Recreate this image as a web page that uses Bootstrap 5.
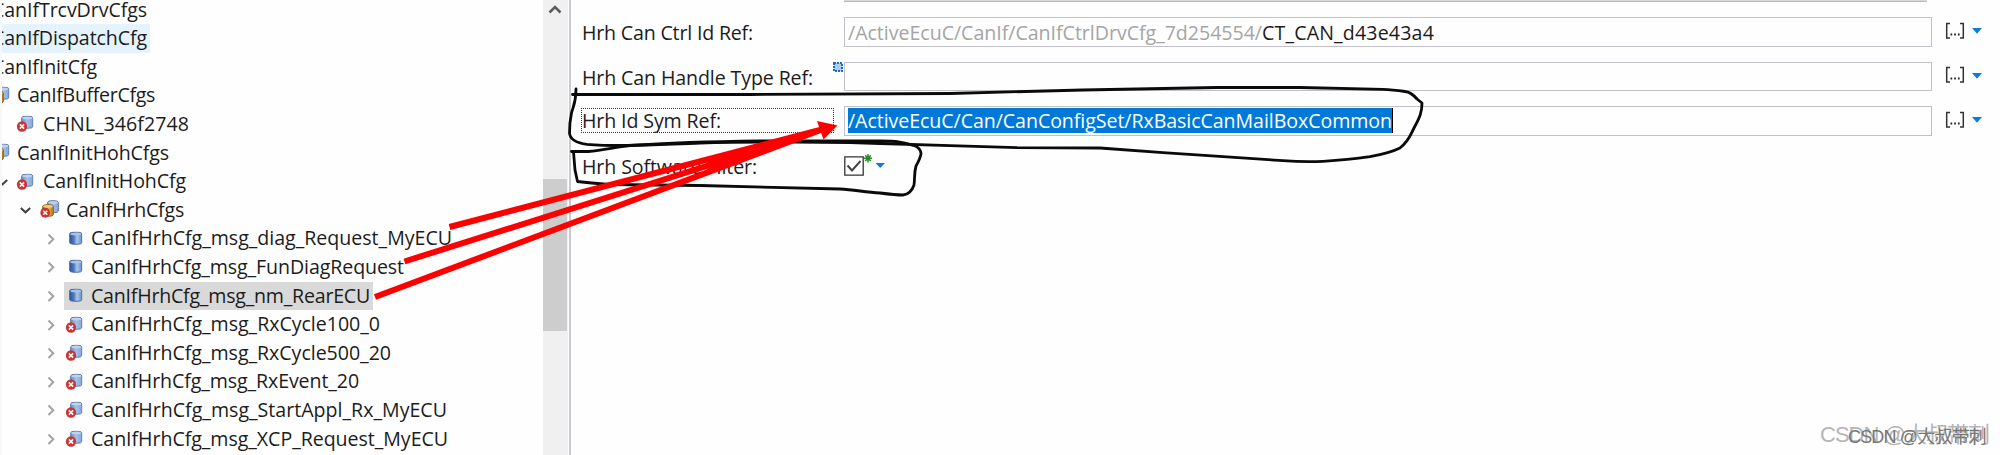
<!DOCTYPE html>
<html lang="en">
<head>
<meta charset="utf-8">
<title>CanIf configuration</title>
<link href="https://cdn.jsdelivr.net/npm/bootstrap@5.3.0/dist/css/bootstrap.min.css" rel="stylesheet">
<script src="https://cdn.jsdelivr.net/npm/bootstrap@5.3.0/dist/js/bootstrap.bundle.min.js"></script>
<style>
  body { width: 2000px; height: 455px; font: 19.6px/28px "Open Sans", "Noto Sans", sans-serif; color: #1c1c1c; background: #fefefe; }
  .tree { width: 543px; border-left: 2px solid #f8f8f8; }
  .tree-rows { margin-top: -4.3px; }
  .tree-item { height: 28.6px; }
  .tree-item svg { flex: none; }
  .lv-cut { margin-left: -10px; }
  .lv-0 { margin-left: -9px; }
  .lv-1 { margin-left: -6px; }
  .lv-2 { margin-left: 17px; }
  .lv-3 { margin-left: 42px; }
  .twist { width: 13px; margin-right: 7px; }
  .lv-1 .twist, .lv-2 .twist { margin-right: 6px; }
  .glyph { width: 24px; margin-right: 3px; }
  .lv-0 .glyph { margin-right: 0; }
  .lv-1 .glyph, .lv-2 .glyph { margin-right: 4px; }
  .hot { background: #e5f3ff; }
  .picked { background: #d9d9d9; }
  .node { height: 28.6px; line-height: 28.6px; padding-right: 3px; }
  .fit { white-space: pre; display: inline-block; }
  .scroller { width: 25px; background: #f0f0f0; }
  .scroller svg { margin: 4px 0 0 5px; }
  .thumb { margin-top: 163px; height: 152px; width: 24px; background: #cdcdcd; }
  .splitter { width: 2px; margin-left: 1px; background: #c9c9d0; }
  .form-pane { padding-left: 11px; }
  .stub { height: 2px; margin-left: 262px; width: 1083px; background: #d9d9dd; border-bottom: 1px solid #b9b9c0; }
  .top-gap { height: 15px; }
  .form-line { height: 29.6px; margin-bottom: 15px; }
  .name-cell { width: 262px; height: 29.6px; line-height: 31px; }
  .name-cell.focused { width: 253px; height: 25px; line-height: 24px; border: 1px dotted #333; margin: 0 10px 0 -1px; }
  .field { width: 1088px; height: 29.6px; border: 1.5px solid #c0c0c6; padding-left: 3px; line-height: 29px; }
  .dim { color: #a5a5a5; }
  .chosen { background: #0078d7; color: #fff; height: 25px; line-height: 26px; border-right: 1px solid #000; }
  .browse { width: 20px; height: 18px; margin-left: 13px; margin-top: -2px; }
  .drop { margin-left: 7px; margin-top: -1px; }
  .tag-new { left: -12px; top: -1px; }
  .ink { left: 0; top: 0; pointer-events: none; }
  .mark-a, .mark-b { white-space: pre; font-family: "Liberation Sans", "Noto Sans CJK SC", sans-serif; line-height: 26px; }
  .mark-a { left: 1820px; top: 422px; font-size: 22px; color: #b5b5b5; }
  .mark-b { left: 1848px; top: 424px; font-size: 18px; color: #777; }
</style>
</head>
<body class="position-relative overflow-hidden">
<svg width="0" height="0" class="position-absolute">
  <defs>
    <linearGradient id="blue"><stop offset="0" stop-color="#2c5499"/><stop offset=".35" stop-color="#4f7bc2"/><stop offset=".6" stop-color="#a9c6ec"/><stop offset="1" stop-color="#6b90c8"/></linearGradient>
    <linearGradient id="pale"><stop offset="0" stop-color="#6d8fc4"/><stop offset=".5" stop-color="#a3c0e8"/><stop offset="1" stop-color="#86a6d6"/></linearGradient>
    <linearGradient id="gold"><stop offset="0" stop-color="#9b6a10"/><stop offset=".6" stop-color="#e8b540"/><stop offset="1" stop-color="#a87415"/></linearGradient>
    <symbol id="cyl" viewBox="0 0 14 14" preserveAspectRatio="none"><path d="M.7 2.400Q.7.6 7 .6t6.300 1.800v9.100Q13.300 13.300 7 13.300T.7 11.500z" fill="url(#blue)" stroke="#3f5f95" stroke-width=".9"/><ellipse cx="7" cy="2.700" rx="5.700" ry="1.500" fill="#a9c3e6"/></symbol>
    <symbol id="cylp" viewBox="0 0 14 14" preserveAspectRatio="none"><path d="M.7 2.400Q.7.6 7 .6t6.300 1.800v9.100Q13.300 13.300 7 13.300T.7 11.500z" fill="url(#pale)" stroke="#4d6c9f" stroke-width=".9"/><ellipse cx="7" cy="2.700" rx="5.700" ry="1.500" fill="#bcd2ef"/></symbol>
    <symbol id="cylg" viewBox="0 0 14 14" preserveAspectRatio="none"><path d="M.7 2.400Q.7.6 7 .6t6.300 1.800v9.100Q13.300 13.300 7 13.300T.7 11.500z" fill="url(#gold)" stroke="#875b10" stroke-width=".9"/><ellipse cx="7" cy="2.700" rx="5.700" ry="1.500" fill="#eccb7c"/></symbol>
    <symbol id="err" viewBox="0 0 12 12"><circle cx="6" cy="6" r="5.600" fill="#cb3434"/><path d="M3.700 3.700l4.600 4.600M8.300 3.700L3.700 8.300" stroke="#fff" stroke-width="1.700"/></symbol>
    <symbol id="ok-node" viewBox="0 0 24 24"><use href="#cyl" x="5" y="4.500" width="13.500" height="13.500"/></symbol>
    <symbol id="bad-node" viewBox="0 0 24 24"><use href="#cylp" x="6" y="3.500" width="12.500" height="13.500"/><use href="#err" x="1.500" y="9" width="11" height="11"/></symbol>
    <symbol id="bad-group" viewBox="0 0 24 24"><use href="#cylp" x="9" y="2" width="12" height="13.500"/><use href="#cylg" x="4" y="6" width="12" height="13"/><use href="#err" x="2" y="9.500" width="10.500" height="10.500"/></symbol>
    <symbol id="group" viewBox="0 0 24 24"><use href="#cylp" x="4.500" y="2.500" width="12" height="13.500"/><use href="#cylg" x="-1" y="6.500" width="12" height="13.500"/></symbol>
    <symbol id="shut" viewBox="0 0 13 20"><path d="M4.500 5.500L9.300 10.200L4.500 15" fill="none" stroke="#a3a3a3" stroke-width="2"/></symbol>
    <symbol id="open" viewBox="0 0 13 20"><path d="M1.800 8L6.500 12.300L11.200 8" fill="none" stroke="#404040" stroke-width="2"/></symbol>
    <symbol id="dots" viewBox="0 0 20 18"><path d="M5 1.500H1.700v14.500H5M15 1.500h3.300v14.500H15" fill="none" stroke="#333" stroke-width="1.500"/><path d="M5.500 11.500h1.700v2H5.500zM9.200 11.500h1.700v2H9.200zM12.900 11.500h1.700v2h-1.700z" fill="#222"/></symbol>
    <symbol id="tri" viewBox="0 0 10 6"><path d="M0 0h10L5 5.800z" fill="#0b7bdc"/></symbol>
  </defs>
</svg>
<main class="d-flex h-100">
  <section class="tree overflow-hidden flex-shrink-0"><div class="tree-rows" id="rows"></div></section>
  <div class="scroller flex-shrink-0">
    <svg class="d-block" width="14" height="12" viewBox="0 0 14 12"><path d="M1.500 8.500L7 3L12.500 8.500" fill="none" stroke="#5c5c5c" stroke-width="2.600"/></svg>
    <div class="thumb"></div>
  </div>
  <div class="splitter flex-shrink-0"></div>
  <section class="form-pane flex-grow-1">
    <div class="stub"></div>
    <div class="top-gap"></div>
    <div class="form-line d-flex align-items-center">
      <div class="name-cell"><span class="fit" data-w="171">Hrh Can Ctrl Id Ref:</span></div>
      <div class="field d-flex"><span class="fit dim" data-w="414">/ActiveEcuC/CanIf/CanIfCtrlDrvCfg_7d254554/</span><span class="fit" data-w="172">CT_CAN_d43e43a4</span></div>
      <svg class="browse"><use href="#dots"/></svg><svg class="drop" width="10" height="6"><use href="#tri"/></svg>
    </div>
    <div class="form-line d-flex align-items-center">
      <div class="name-cell"><span class="fit" data-w="231">Hrh Can Handle Type Ref:</span></div>
      <div class="field position-relative">
        <svg class="tag-new position-absolute" width="10" height="10"><path d="M1 1h8v8H1z" fill="#a9cdf0" stroke="#2369b5" stroke-width="2" stroke-dasharray="2 1"/></svg>
      </div>
      <svg class="browse"><use href="#dots"/></svg><svg class="drop" width="10" height="6"><use href="#tri"/></svg>
    </div>
    <div class="form-line d-flex align-items-center">
      <div class="name-cell focused"><span class="fit" data-w="139">Hrh Id Sym Ref:</span></div>
      <div class="field d-flex align-items-center"><span class="fit chosen" data-w="545">/ActiveEcuC/Can/CanConfigSet/RxBasicCanMailBoxCommon</span></div>
      <svg class="browse"><use href="#dots"/></svg><svg class="drop" width="10" height="6"><use href="#tri"/></svg>
    </div>
    <div class="form-line d-flex align-items-center">
      <div class="name-cell"><span class="fit" data-w="175">Hrh Software Filter:</span></div>
      <svg width="44" height="30" viewBox="0 0 44 30">
        <path d="M.8 5.800h18.400v18.400H.8z" fill="#fff" stroke="#333" stroke-width="1.300"/>
        <path d="M3.500 14.500L8 19.500L16.500 10" fill="none" stroke="#444" stroke-width="2"/>
        <path d="M24 3v8.500M20 7.200h8M21.200 4.400l5.600 5.600M26.800 4.400l-5.600 5.600" stroke="#2a8a2a" stroke-width="1.500"/>
        <path d="M31.500 12h9.500L36.200 17z" fill="#0b7bdc"/>
      </svg>
    </div>
  </section>
</main>
<svg class="ink position-absolute" width="2000" height="455" fill="none">
  <g stroke="#0a0a0a" stroke-width="2.800" stroke-linecap="round" stroke-linejoin="round">
    <path d="M576 89C576 103 573 107 571.500 113C570 120 569.500 127 569.500 133C570 140 577 143 587 144.300C600 145.500 615 145.500 627 145.500C655 145 680 143.500 700 143C760 141 840 142.500 880 143.500C905 144.500 930 145 950 145.700L1017 147.700L1100 148L1163 152.700L1283 160.700Q1303 162 1323 161.300Q1348 160 1370 156.700Q1390 153 1400 148C1409 141 1411 134 1414 128C1420 117 1422 112 1422 103L1417 99Q1411 92 1405 91.500C1395 90 1390 89.500 1383 89.300L1300 87.500H1217L1083 90L950 93.500L750 94.500L572.500 94.500"/>
    <path d="M571.500 151.500H588C605 150 615 147 630 145.500C660 143.500 720 141.500 760 141C800 141 850 141 880 141C900 141 905 143 914 145.500Q921 148 921 154Q920 159 916 166C914 173 915 178 914 185Q911 194 903 195C896 195 888 194 880 193C865 192 855 190 840 189L700 185.500L610 184.500Q590 183 577.500 181.500L575 170L573.500 152"/>
  </g>
  <g stroke="#f00" stroke-width="6"><path d="M449.500 227L822 129.500M404.500 261.500L822 129.500M375 297L822 129.500"/></g>
  <path d="M817 121L837.500 125.500L823.500 139.500z" fill="#f00"/>
</svg>
<div class="mark-a position-absolute"><span class="fit" data-w="169">CSDN @大叔带刺</span></div>
<div class="mark-b position-absolute"><span class="fit" data-w="138">CSDN @大叔带刺</span></div>
<script>
  // [level, twisty, icon, label, label width, state]
  const nodes = [
    ['cut', '', '', 'CanIfTrcvDrvCfgs', 155, ''],
    ['cut', '', '', 'CanIfDispatchCfg', 155, 'hot'],
    ['cut', '', '', 'CanIfInitCfg', 105, ''],
    ['0', '', 'group', 'CanIfBufferCfgs', 138, ''],
    ['1', ' ', 'bad-node', 'CHNL_346f2748', 146, ''],
    ['0', '', 'group', 'CanIfInitHohCfgs', 152, ''],
    ['1', 'open', 'bad-node', 'CanIfInitHohCfg', 143, ''],
    ['2', 'open', 'bad-group', 'CanIfHrhCfgs', 118, ''],
    ['3', 'shut', 'ok-node', 'CanIfHrhCfg_msg_diag_Request_MyECU', 361, ''],
    ['3', 'shut', 'ok-node', 'CanIfHrhCfg_msg_FunDiagRequest', 313, ''],
    ['3', 'shut', 'ok-node', 'CanIfHrhCfg_msg_nm_RearECU', 279, 'picked'],
    ['3', 'shut', 'bad-node', 'CanIfHrhCfg_msg_RxCycle100_0', 289, ''],
    ['3', 'shut', 'bad-node', 'CanIfHrhCfg_msg_RxCycle500_20', 300, ''],
    ['3', 'shut', 'bad-node', 'CanIfHrhCfg_msg_RxEvent_20', 268, ''],
    ['3', 'shut', 'bad-node', 'CanIfHrhCfg_msg_StartAppl_Rx_MyECU', 356, ''],
    ['3', 'shut', 'bad-node', 'CanIfHrhCfg_msg_XCP_Request_MyECU', 357, '']
  ];
  const use = id => id.trim() ? `<use href="#${id}"/>` : '';
  document.getElementById('rows').innerHTML = nodes.map(([lv, tw, ic, label, w, state]) =>
    `<div class="tree-item d-flex align-items-center lv-${lv}">` +
    (tw ? `<svg class="twist" height="20">${use(tw)}</svg>` : '') +
    `<div class="node d-flex align-items-center ${state}">` +
    (ic ? `<svg class="glyph" height="24">${use(ic)}</svg>` : '') +
    `<span class="fit" data-w="${w}">${label}</span></div></div>`).join('');
  document.querySelectorAll('.fit').forEach(el => {
    const n = [...el.textContent].length;
    el.style.letterSpacing = (el.dataset.w - el.getBoundingClientRect().width) / n + 'px';
  });
</script>
</body>
</html>
